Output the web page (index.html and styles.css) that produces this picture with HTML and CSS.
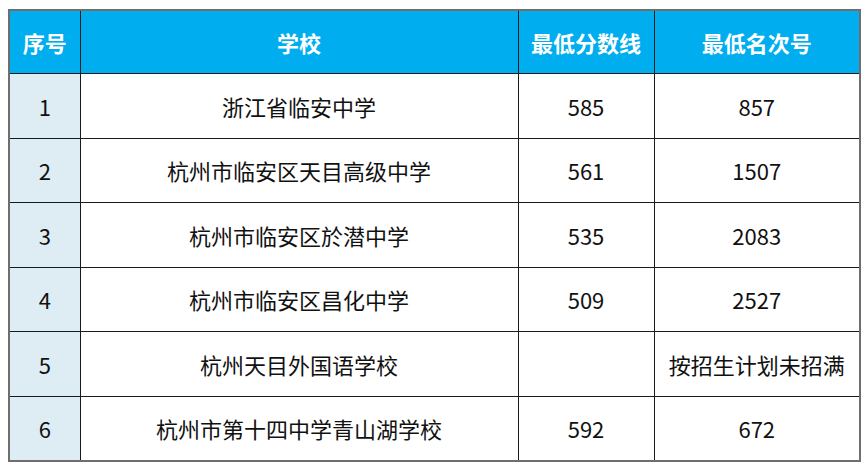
FILE: index.html
```html
<!DOCTYPE html>
<html lang="zh-CN">
<head>
<meta charset="utf-8">
<link rel="stylesheet" href="styles.css">
</head>
<body>
<div class="wrap">
<table class="score">
  <colgroup>
    <col class="c-no"><col class="c-school"><col class="c-score"><col class="c-rank">
  </colgroup>
  <thead>
    <tr><th>序号</th><th>学校</th><th>最低分数线</th><th>最低名次号</th></tr>
  </thead>
  <tbody>
    <tr><td class="no">1</td><td>浙江省临安中学</td><td>585</td><td>857</td></tr>
    <tr><td class="no">2</td><td>杭州市临安区天目高级中学</td><td>561</td><td>1507</td></tr>
    <tr><td class="no">3</td><td>杭州市临安区於潜中学</td><td>535</td><td>2083</td></tr>
    <tr><td class="no">4</td><td>杭州市临安区昌化中学</td><td>509</td><td>2527</td></tr>
    <tr><td class="no">5</td><td>杭州天目外国语学校</td><td></td><td>按招生计划未招满</td></tr>
    <tr><td class="no">6</td><td>杭州市第十四中学青山湖学校</td><td>592</td><td>672</td></tr>
  </tbody>
</table>
</div>
</body>
</html>
```
FILE: styles.css
```css
html, body {
  margin: 0;
  padding: 0;
  background: #ffffff;
}
body {
  font-family: "Noto Sans CJK SC", "Noto Sans", sans-serif;
  width: 867px;
  height: 466px;
  overflow: hidden;
}
.wrap {
  padding: 9px 0 0 8px;
}
.score {
  border-collapse: collapse;
  table-layout: fixed;
  width: 851px;
  border: 2px solid #6e6e6e;
}
.c-no { width: 71px; }
.c-school { width: 438px; }
.c-score { width: 136px; }
.c-rank { width: 206px; }
.score th, .score td {
  border: 1px solid #1a1a1a;
  text-align: center;
  vertical-align: middle;
  padding: 0;
  font-size: 22px;
  line-height: 1;
  color: #111111;
}
.score th {
  background: #00aeef;
  color: #ffffff;
  font-weight: 700;
  height: 62px;
}
.score td {
  height: 63.5px;
  font-weight: 400;
}
.score td.no {
  background: #ddedf3;
}
```
